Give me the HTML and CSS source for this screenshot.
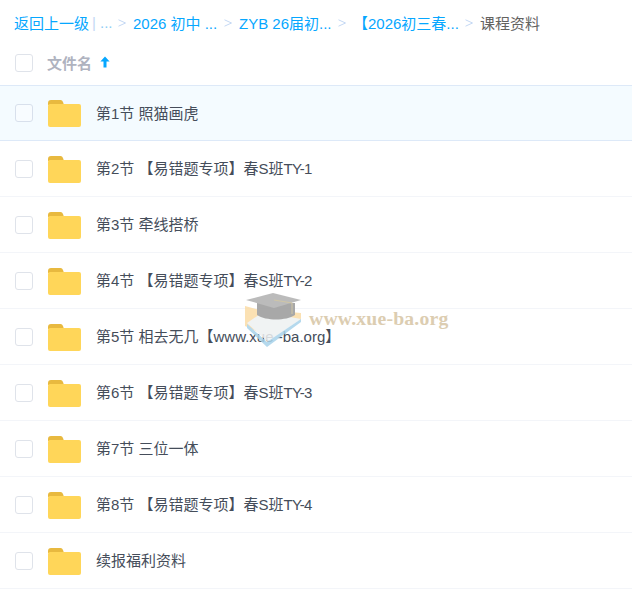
FILE: index.html
```html
<!DOCTYPE html>
<html lang="en">
<head>
  <meta charset="UTF-8">
  <meta name="viewport" content="width=device-width, initial-scale=1.0">
  <title>课程资料</title>
  <link rel="stylesheet" href="styles.css">
</head>
<body>
<svg class="icon-defs" xmlns="http://www.w3.org/2000/svg" aria-hidden="true">
  <symbol id="folder" viewBox="0 0 33 27">
    <path d="M0 3a3 3 0 0 1 3-3h9a3 3 0 0 1 3 2l1 3H0Z" fill="#e8b93f"></path>
    <path d="M0 6a2 2 0 0 1 2-2h29a2 2 0 0 1 2 2v19a2 2 0 0 1-2 2H2a2 2 0 0 1-2-2Z" fill="#ffd659"></path>
  </symbol>
  <symbol id="chev" viewBox="0 0 8 8">
    <path d="M0.5 0.8 7.5 4 0.5 7.2" fill="none" stroke="#c4d8f4" stroke-width="1"></path>
  </symbol>
</svg>

<nav class="crumbs">
  <a class="crumb crumb-back">返回上一级</a>
  <span class="crumb-bar">|</span>
  <a class="crumb crumb-dots">...</a>
  <svg class="crumb-sep"><use href="#chev"></use></svg>
  <a class="crumb crumb-a">2026 初中 ...</a>
  <svg class="crumb-sep"><use href="#chev"></use></svg>
  <a class="crumb crumb-b">ZYB 26届初...</a>
  <svg class="crumb-sep"><use href="#chev"></use></svg>
  <a class="crumb crumb-c">【2026初三春...</a>
  <svg class="crumb-sep"><use href="#chev"></use></svg>
  <span class="crumb-current">课程资料</span>
</nav>

<div class="list-head">
  <span class="check"></span>
  <span class="head-name">文件名</span>
  <svg class="sort-arrow" xmlns="http://www.w3.org/2000/svg" viewBox="0 0 10 12">
    <path d="M5 0.5 9.6 5.6H6.5V11.5H3.5V5.6H0.4Z" fill="#06a7ff"></path>
  </svg>
</div>

<ul class="file-list">
  <li class="file-row selected"><span class="check"></span><svg class="folder"><use href="#folder"></use></svg><span class="file-name">第1节 照猫画虎</span></li>
  <li class="file-row"><span class="check"></span><svg class="folder"><use href="#folder"></use></svg><span class="file-name">第2节 【易错题专项】春S班<span class="tight">TY-1</span></span></li>
  <li class="file-row"><span class="check"></span><svg class="folder"><use href="#folder"></use></svg><span class="file-name">第3节 牵线搭桥</span></li>
  <li class="file-row"><span class="check"></span><svg class="folder"><use href="#folder"></use></svg><span class="file-name">第4节 【易错题专项】春S班<span class="tight">TY-2</span></span></li>
  <li class="file-row"><span class="check"></span><svg class="folder"><use href="#folder"></use></svg><span class="file-name">第5节 相去无几【www.xue -ba.org】</span></li>
  <li class="file-row"><span class="check"></span><svg class="folder"><use href="#folder"></use></svg><span class="file-name">第6节 【易错题专项】春S班<span class="tight">TY-3</span></span></li>
  <li class="file-row"><span class="check"></span><svg class="folder"><use href="#folder"></use></svg><span class="file-name">第7节 三位一体</span></li>
  <li class="file-row"><span class="check"></span><svg class="folder"><use href="#folder"></use></svg><span class="file-name">第8节 【易错题专项】春S班<span class="tight">TY-4</span></span></li>
  <li class="file-row"><span class="check"></span><svg class="folder"><use href="#folder"></use></svg><span class="file-name">续报福利资料</span></li>
</ul>

<div class="watermark">
  <svg class="watermark-logo" xmlns="http://www.w3.org/2000/svg" viewBox="0 0 60 56">
    <path d="M1 14 16 18 14 40 1 34Z" fill="#fbdca6"></path>
    <path d="M46 20 57 21 57 28 46 30Z" fill="#fbdca6"></path>
    <path d="M3 31 19 20 57 27 24 50Z" fill="#eef1f2"></path>
    <path d="M3 32 23 50 57 27 57 30 23 55 3 36Z" fill="#a9d3ea"></path>
    <path d="M13 11H51V23C42 29 22 29 13 23Z" fill="#9a9a9a"></path>
    <path d="M2 8 29 1 57 8 30 16Z" fill="#b0b0b0"></path>
    <path d="M30 8 48 11V22" fill="none" stroke="#c9bd96" stroke-width="1"></path>
  </svg>
  <span class="watermark-text">www.xue-ba.org</span>
</div>
</body>
</html>
```

FILE: styles.css
```css
:root {
  --link: #06a7ff;
  --text: #454d5a;
  --muted: #afb3bf;
  --sep: #c4d8f4;
  --line: #f3f5f9;
}

* {
  margin: 0;
  padding: 0;
  box-sizing: border-box;
}

body {
  position: relative;
  font-family: "Liberation Sans", "Noto Sans CJK SC", sans-serif;
  font-size: 15px;
  color: var(--text);
  background-color: #ffffff;
  overflow: hidden;
}

.icon-defs {
  display: none;
}

.crumbs {
  display: flex;
  align-items: center;
  height: 48px;
  padding: 0 0 3px 14px;
  white-space: nowrap;
}

.crumb {
  color: var(--link);
}

.crumb-back { width: 78px; }
.crumb-dots { width: 18px; margin-left: 5px; color: #8ecdf5; }
.crumb-a { width: 91px; }
.crumb-b { width: 99px; }
.crumb-c { width: 112px; }

.crumb-bar {
  color: var(--sep);
  width: 3px;
}

.crumb-sep {
  flex: none;
  width: 8px;
  height: 8px;
  margin-right: 7px;
}

.crumb-current {
  color: #63625f;
}

.list-head {
  display: flex;
  align-items: center;
  height: 38px;
  padding: 0 0 7px 15px;
  border-bottom: 1px solid #dde9f8;
}

.check {
  flex: none;
  width: 18px;
  height: 18px;
  border: 1px solid #dfe3ea;
  border-radius: 3px;
  background-color: #ffffff;
}

.head-name {
  margin: 0 0 2px 14px;
  color: var(--muted);
  font-weight: 700;
}

.sort-arrow {
  width: 10px;
  height: 12px;
  margin: 0 0 2px 8px;
}

.file-list {
  list-style: none;
}

.file-row {
  display: flex;
  align-items: center;
  height: 56px;
  padding-left: 15px;
  border-bottom: 1px solid var(--line);
}

.file-row.selected {
  height: 55px;
  background-color: #f4fbff;
  border-bottom-color: #dde9f8;
}

.file-row.selected .check {
  border-color: #d8e0ec;
  background-color: #f8fcff;
}

.folder {
  flex: none;
  width: 33px;
  height: 27px;
  margin: 1px 0 0 15px;
}

.file-name {
  margin: 0 0 2px 15px;
}

.tight {
  letter-spacing: -0.8px;
}

.watermark {
  position: absolute;
  top: 292px;
  left: 244px;
  display: flex;
  align-items: center;
  gap: 5px;
  pointer-events: none;
}

.watermark-logo {
  width: 60px;
  height: 56px;
  opacity: 0.85;
}

.watermark-text {
  margin-bottom: 3px;
  font-family: "Liberation Serif", serif;
  font-size: 19.7px;
  font-weight: 700;
  color: #dccdb1;
  letter-spacing: 0.2px;
}
```
